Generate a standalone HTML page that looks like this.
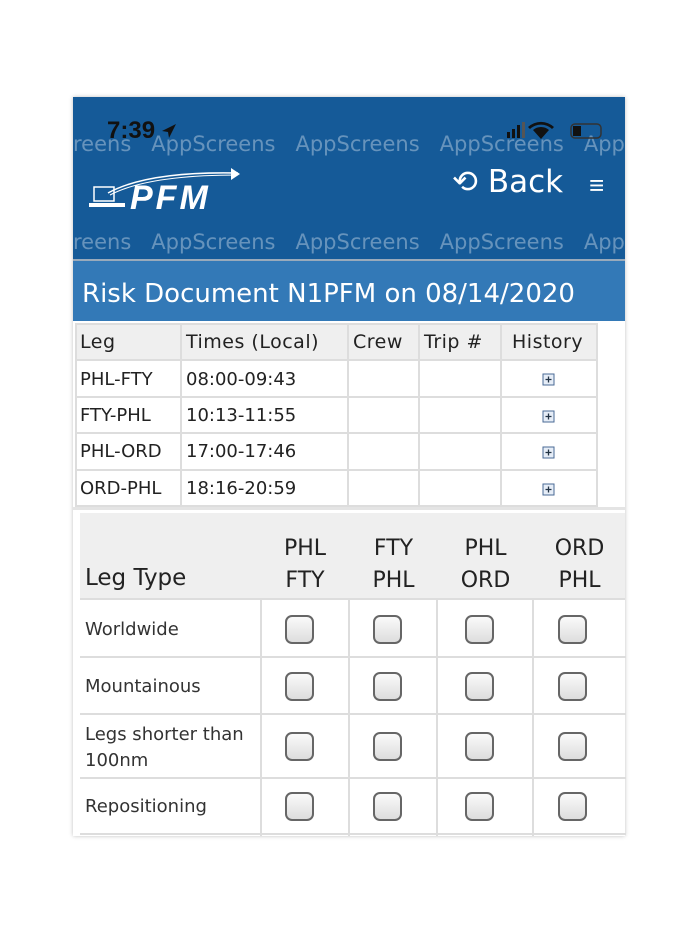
<!DOCTYPE html>
<html><head><style>
*{margin:0;padding:0;box-sizing:border-box}
body{width:700px;height:934px;background:#fff;position:relative;font-family:"Liberation Sans","DejaVu Sans",sans-serif;overflow:hidden}
.a{position:absolute}
.wm{position:absolute;color:rgba(255,255,255,0.35);font-size:21px;white-space:nowrap;letter-spacing:0;font-family:"DejaVu Sans",sans-serif}
.t{position:absolute;font-family:"DejaVu Sans",sans-serif;color:#222}
.cb{position:absolute;width:29px;height:29px;border:2px solid #666;border-radius:7px;background:linear-gradient(#fafafa,#ddd)}
</style></head><body>
<div class="a" style="left:73px;top:97px;width:552px;height:739px;background:#fff;box-shadow:0 0 4px rgba(0,0,0,0.25)"></div>
<div class="a" style="left:73px;top:97px;width:552px;height:162px;background:#155a98"></div>
<div class="wm" style="left:73px;top:132px;width:552px;overflow:hidden">reens&nbsp;&nbsp;&nbsp;AppScreens&nbsp;&nbsp;&nbsp;AppScreens&nbsp;&nbsp;&nbsp;AppScreens&nbsp;&nbsp;&nbsp;AppSc</div>
<div class="wm" style="left:73px;top:230px;width:552px;overflow:hidden">reens&nbsp;&nbsp;&nbsp;AppScreens&nbsp;&nbsp;&nbsp;AppScreens&nbsp;&nbsp;&nbsp;AppScreens&nbsp;&nbsp;&nbsp;AppSc</div>
<div class="a" style="left:107px;top:117px;color:#111;font-size:24px;font-weight:bold">7:39</div>
<svg class="a" style="left:160px;top:122px" width="18" height="18"><path d="M2 9 L16 2 L9 16 L8 10 Z" fill="#111"/></svg>
<svg class="a" style="left:505px;top:120px" width="100" height="22"><rect x="2" y="12" width="3" height="6" fill="#111"/><rect x="7" y="9" width="3" height="9" fill="#111"/><rect x="12" y="5" width="3" height="13" fill="#111"/><rect x="17" y="2" width="3" height="16" fill="#555"/><path d="M36 19 L44 10 A12 12 0 0 0 28 10 Z M23 7 A19 19 0 0 1 49 7 L47 9 A16 16 0 0 0 25 9 Z" fill="#111"/><rect x="66" y="4" width="30" height="14" rx="4" fill="none" stroke="#333" stroke-width="1.5"/><rect x="68" y="6" width="8" height="10" fill="#111"/></svg>
<svg class="a" style="left:88px;top:163px" width="165" height="50"><path d="M20 30 Q60 8 150 10" stroke="#fff" stroke-width="1.5" fill="none"/><path d="M22 32 Q60 12 150 12" stroke="#fff" stroke-width="1" fill="none"/><path d="M143 5 L152 11 L143 17 Z" fill="#fff"/><rect x="6" y="24" width="20" height="14" fill="none" stroke="#fff" stroke-width="1.5"/><rect x="1" y="40" width="36" height="4" fill="#fff"/><text x="42" y="46" fill="#fff" font-size="34" font-style="italic" font-weight="bold" font-family="Liberation Sans" letter-spacing="3">PFM</text></svg>
<div class="a" style="left:452px;top:164px;color:#fff;font-size:31px;font-family:'DejaVu Sans',sans-serif">⟲ Back</div>
<div class="a" style="left:589px;top:170px;color:#fff;font-size:26px">≡</div>
<div class="a" style="left:73px;top:259px;width:552px;height:2px;background:#9ab"></div>
<div class="a" style="left:73px;top:261px;width:552px;height:60px;background:#3379b7"></div>
<div class="a" style="left:82px;top:279px;color:#fff;font-size:26px;font-family:'DejaVu Sans',sans-serif">Risk Document N1PFM on 08/14/2020</div>
<svg class="a" style="left:75px;top:323px" width="523" height="184">
<rect x="0" y="0" width="522" height="37" fill="#efefef"/>
<g stroke="#ddd" stroke-width="2" fill="none"><rect x="1" y="1" width="521" height="182"/>
<line x1="0" y1="37" x2="522" y2="37"/><line x1="0" y1="74" x2="522" y2="74"/><line x1="0" y1="110" x2="522" y2="110"/><line x1="0" y1="147" x2="522" y2="147"/>
<line x1="106" y1="0" x2="106" y2="184"/><line x1="273" y1="0" x2="273" y2="184"/><line x1="344" y1="0" x2="344" y2="184"/><line x1="426" y1="0" x2="426" y2="184"/></g>
<g fill="#e6edf7" stroke="#4a6a96"><rect x="468" y="51" width="11" height="11"/><rect x="468" y="88" width="11" height="11"/><rect x="468" y="124" width="11" height="11"/><rect x="468" y="161" width="11" height="11"/></g>
<g stroke="#234" stroke-width="1.3"><path d="M470.5 56.5h6M473.5 53.5v6M470.5 93.5h6M473.5 90.5v6M470.5 129.5h6M473.5 126.5v6M470.5 166.5h6M473.5 163.5v6"/></g>
</svg>
<div class="t" style="left:80px;top:331px;font-size:19px;letter-spacing:0.5px">Leg</div>
<div class="t" style="left:186px;top:331px;font-size:19px;letter-spacing:0.5px">Times (Local)</div>
<div class="t" style="left:353px;top:331px;font-size:19px;letter-spacing:0.5px">Crew</div>
<div class="t" style="left:424px;top:331px;font-size:19px;letter-spacing:0.5px">Trip #</div>
<div class="t" style="left:512px;top:331px;font-size:19px;letter-spacing:0.5px">History</div>
<div class="t" style="left:80px;top:369px;font-size:18px">PHL-FTY</div><div class="t" style="left:186px;top:369px;font-size:18px">08:00-09:43</div>
<div class="t" style="left:80px;top:405px;font-size:18px">FTY-PHL</div><div class="t" style="left:186px;top:405px;font-size:18px">10:13-11:55</div>
<div class="t" style="left:80px;top:441px;font-size:18px">PHL-ORD</div><div class="t" style="left:186px;top:441px;font-size:18px">17:00-17:46</div>
<div class="t" style="left:80px;top:478px;font-size:18px">ORD-PHL</div><div class="t" style="left:186px;top:478px;font-size:18px">18:16-20:59</div>
<div class="a" style="left:73px;top:507px;width:552px;height:3px;background:#e4e4e4"></div>
<div class="a" style="left:80px;top:513px;width:545px;height:87px;background:#efefef;border-bottom:2px solid #ddd"></div>
<div class="t" style="left:85px;top:565px;font-size:23px">Leg Type</div>
<div class="t" style="left:262px;top:533px;width:86px;text-align:center;font-size:22px;line-height:32px">PHL<br>FTY</div>
<div class="t" style="left:350px;top:533px;width:87px;text-align:center;font-size:22px;line-height:32px">FTY<br>PHL</div>
<div class="t" style="left:438px;top:533px;width:95px;text-align:center;font-size:22px;line-height:32px">PHL<br>ORD</div>
<div class="t" style="left:534px;top:533px;width:91px;text-align:center;font-size:22px;line-height:32px">ORD<br>PHL</div>
<svg class="a" style="left:80px;top:600px" width="546" height="236"><g stroke="#ddd" stroke-width="2"><line x1="0" y1="57" x2="546" y2="57"/><line x1="0" y1="114" x2="546" y2="114"/><line x1="0" y1="178" x2="546" y2="178"/><line x1="0" y1="234" x2="546" y2="234"/><line x1="181" y1="0" x2="181" y2="236"/><line x1="269" y1="0" x2="269" y2="236"/><line x1="357" y1="0" x2="357" y2="236"/><line x1="453" y1="0" x2="453" y2="236"/></g></svg>
<div class="t" style="left:85px;top:619px;font-size:18px;color:#333">Worldwide</div>
<div class="t" style="left:85px;top:676px;font-size:18px;color:#333">Mountainous</div>
<div class="t" style="left:85px;top:722px;font-size:18px;color:#333;line-height:26px">Legs shorter than<br>100nm</div>
<div class="t" style="left:85px;top:796px;font-size:18px;color:#333">Repositioning</div>
<div class="cb" style="left:285px;top:615px"></div><div class="cb" style="left:373px;top:615px"></div><div class="cb" style="left:465px;top:615px"></div><div class="cb" style="left:558px;top:615px"></div>
<div class="cb" style="left:285px;top:672px"></div><div class="cb" style="left:373px;top:672px"></div><div class="cb" style="left:465px;top:672px"></div><div class="cb" style="left:558px;top:672px"></div>
<div class="cb" style="left:285px;top:732px"></div><div class="cb" style="left:373px;top:732px"></div><div class="cb" style="left:465px;top:732px"></div><div class="cb" style="left:558px;top:732px"></div>
<div class="cb" style="left:285px;top:792px"></div><div class="cb" style="left:373px;top:792px"></div><div class="cb" style="left:465px;top:792px"></div><div class="cb" style="left:558px;top:792px"></div>
</body></html>
